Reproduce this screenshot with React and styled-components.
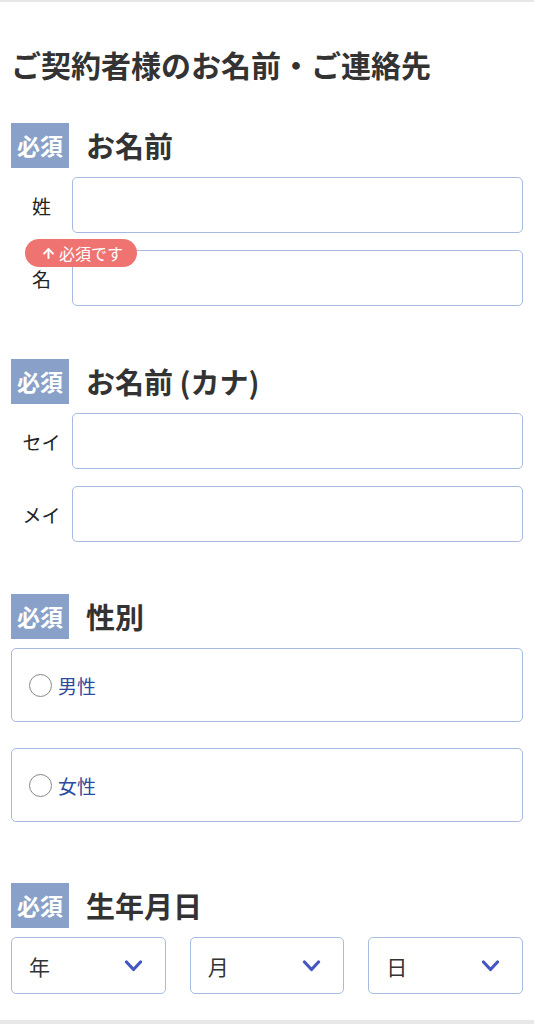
import React from "react";
import styled, { createGlobalStyle } from "styled-components";
import { ArrowUp } from "lucide-react";

const GlobalStyle = createGlobalStyle`
  * {
    box-sizing: border-box;
  }

  body {
    margin: 0;
    background: #fff;
    font-family: "Noto Sans CJK JP", "Noto Sans", sans-serif;
    color: #333;
  }
`;

const Page = styled.div`
  height: 1024px;
  overflow: hidden;
  border-top: 2px solid #e6e6e6;
  border-bottom: 4px solid #e8e8e8;
  padding: 41px 11px 0;
`;

const Title = styled.h1`
  margin: 0;
  font-size: 30px;
  line-height: 1.4;
  font-weight: 700;
  color: #333;
`;

const Section = styled.section`
  margin-top: ${(p) => p.$gap}px;
`;

const Header = styled.div`
  display: flex;
  align-items: center;
  gap: 17px;
`;

const Badge = styled.span`
  display: flex;
  align-items: center;
  justify-content: center;
  width: 58px;
  height: 45px;
  background: #89a0c8;
  color: #fff;
  font-size: 23px;
  font-weight: 700;
  line-height: 1;
`;

const Heading = styled.h2`
  margin: 0;
  font-size: 29px;
  line-height: 1.4;
  font-weight: 700;
  color: #333;
`;

const Fields = styled.div`
  position: relative;
  display: flex;
  flex-direction: column;
  gap: ${(p) => p.$gap || 17}px;
  margin-top: 9px;
`;

const Row = styled.div`
  display: flex;
  align-items: center;
`;

const Label = styled.label`
  width: 61px;
  flex-shrink: 0;
  text-align: center;
  font-size: 19px;
  color: #222;
`;

const Input = styled.input`
  flex: 1;
  min-width: 0;
  height: 56px;
  border: 1px solid #a7badf;
  border-radius: 5px;
  padding: 0 14px;
  font-size: 18px;
  font-family: inherit;
  background: #fff;
  outline: none;
`;

const Tooltip = styled.div`
  position: absolute;
  left: 14px;
  top: 62px;
  height: 28px;
  display: flex;
  align-items: center;
  gap: 3px;
  padding: 0 14px 0 16px;
  border-radius: 14px;
  background: #ef7471;
  color: #fff;
  font-size: 16px;
  line-height: 1;
`;

const RadioBox = styled.label`
  display: flex;
  align-items: center;
  gap: 6px;
  height: 74px;
  padding-left: 17px;
  border: 1px solid #a7badf;
  border-radius: 5px;
  font-size: 19px;
  color: #2b4aa0;
  cursor: pointer;
`;

const Circle = styled.span`
  width: 23px;
  height: 23px;
  border-radius: 50%;
  border: 1.5px solid #888;
  background: #fff;
`;

const SelectGrid = styled.div`
  display: grid;
  grid-template-columns: repeat(3, 1fr);
  gap: 24px;
  margin-top: 9px;
`;

const SelectBox = styled.div`
  display: flex;
  align-items: center;
  justify-content: space-between;
  height: 57px;
  padding: 0 22px 0 17px;
  border: 1px solid #a7badf;
  border-radius: 5px;
  font-size: 21px;
  color: #333;
`;

const Chevron = () => (
  <svg width="19" height="12" viewBox="0 0 19 12" fill="none">
    <path
      d="M2.5 2 L9.5 9.5 L16.5 2"
      stroke="#4457c0"
      strokeWidth="3.2"
      strokeLinecap="round"
      strokeLinejoin="round"
    />
  </svg>
);

const App = () => {
  return (
    <>
      <GlobalStyle />
      <Page>
        <Title>ご契約者様のお名前・ご連絡先</Title>

        <Section $gap={38}>
          <Header>
            <Badge>必須</Badge>
            <Heading>お名前</Heading>
          </Header>
          <Fields>
            <Row>
              <Label>姓</Label>
              <Input name="sei" />
            </Row>
            <Row>
              <Label>名</Label>
              <Input name="mei" />
            </Row>
            <Tooltip>
              <ArrowUp size={15} strokeWidth={3.2} />
              必須です
            </Tooltip>
          </Fields>
        </Section>

        <Section $gap={53}>
          <Header>
            <Badge>必須</Badge>
            <Heading>お名前 (カナ)</Heading>
          </Header>
          <Fields>
            <Row>
              <Label>セイ</Label>
              <Input name="seiKana" />
            </Row>
            <Row>
              <Label>メイ</Label>
              <Input name="meiKana" />
            </Row>
          </Fields>
        </Section>

        <Section $gap={52}>
          <Header>
            <Badge>必須</Badge>
            <Heading>性別</Heading>
          </Header>
          <Fields $gap={26}>
            <RadioBox>
              <Circle />
              男性
            </RadioBox>
            <RadioBox>
              <Circle />
              女性
            </RadioBox>
          </Fields>
        </Section>

        <Section $gap={61}>
          <Header>
            <Badge>必須</Badge>
            <Heading>生年月日</Heading>
          </Header>
          <SelectGrid>
            <SelectBox>
              年<Chevron />
            </SelectBox>
            <SelectBox>
              月<Chevron />
            </SelectBox>
            <SelectBox>
              日<Chevron />
            </SelectBox>
          </SelectGrid>
        </Section>
      </Page>
    </>
  );
};

export default App;
